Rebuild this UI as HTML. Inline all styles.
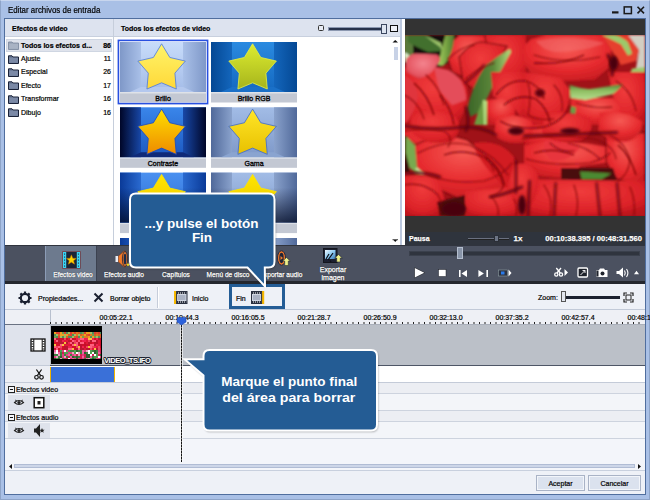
<!DOCTYPE html>
<html><head><meta charset="utf-8">
<style>
*{margin:0;padding:0;box-sizing:border-box}
html,body{width:650px;height:500px;overflow:hidden;background:#a9bfe1}
body{position:relative;font-family:"Liberation Sans",sans-serif;font-size:8px;color:#000}
.a{position:absolute}
.t{position:absolute;white-space:nowrap;line-height:1}
.w{color:#fff;-webkit-text-stroke:0.25px #fff;text-shadow:0 0 1px #000}
.k{-webkit-text-stroke:0.2px #000}
.o{color:#fff;font-weight:bold;text-shadow:1px 0 0 #223,-1px 0 0 #223,0 1px 0 #223,0 -1px 0 #223}
</style></head><body>
<!-- window frame -->
<div class="a" style="left:0;top:0;width:650px;height:500px;background:#a9c0e6;border:1px solid #8ea4c8;border-top-color:#c8d6ee"></div>
<div class="t k" style="left:8px;top:6px;font-size:8.6px;transform:scaleX(0.92);transform-origin:0 0">Editar archivos de entrada</div>
<!-- min max close -->
<svg class="a" style="left:608px;top:3px" width="40" height="14" viewBox="608 3 40 14">
 <rect x="612" y="11.3" width="6.5" height="2.2" fill="#1a1a1a"/>
 <rect x="624.2" y="6.9" width="7.2" height="6.7" fill="none" stroke="#1a1a1a" stroke-width="1.5"/>
 <path d="M637.5,6.8 L644,13.4 M644,6.8 L637.5,13.4" stroke="#1a1a1a" stroke-width="1.6"/>
</svg>
<!-- client area -->
<div class="a" style="left:4px;top:18px;width:642px;height:477px;background:#eef1f7;border:1px solid #506e9e"></div>

<!-- left panel -->
<div class="a" style="left:5px;top:19px;width:108px;height:226px;background:#fff"></div>
<div class="a" style="left:5px;top:19px;width:108px;height:18px;background:#dde3ef;border-bottom:1px solid #c8d0de"></div>
<div class="t k" style="left:12px;top:25px;font-size:7px;font-weight:bold">Efectos de video</div>
<div class="a" style="left:6px;top:39px;width:106px;height:13px;background:#dfe3ec;border:1px solid #cfd6e2"></div>
<svg class="a" style="left:8px;top:41.2px" width="11" height="9" viewBox="0 0 11 9"><path d="M0.5,1 h3.5 l1,1 h5.5 v6.5 h-10z" fill="#9aa5b8" stroke="#7a869c" stroke-width="0.8"/><rect x="1.2" y="2.8" width="8.8" height="5" fill="#a9b3c4"/></svg>
<div class="t k" style="left:21px;top:41.5px;font-size:7px;font-weight:bold">Todos los efectos d...</div>
<div class="t k" style="right:539px;top:41.5px;font-size:7px;font-weight:bold">86</div>
<svg class="a" style="left:8px;top:54.6px" width="11" height="9" viewBox="0 0 11 9"><path d="M0.5,0.8 h3.5 l1,1.2 h5.5 v6.5 h-10z" fill="#6a7894" stroke="#1a2238" stroke-width="1"/><rect x="1.3" y="2.8" width="8.6" height="4.9" fill="#7b89a6"/></svg>
<div class="t k" style="left:21px;top:54.9px;font-size:7px;font-weight:normal">Ajuste</div>
<div class="t k" style="right:539px;top:54.9px;font-size:7px;font-weight:normal">11</div>
<svg class="a" style="left:8px;top:68.0px" width="11" height="9" viewBox="0 0 11 9"><path d="M0.5,0.8 h3.5 l1,1.2 h5.5 v6.5 h-10z" fill="#6a7894" stroke="#1a2238" stroke-width="1"/><rect x="1.3" y="2.8" width="8.6" height="4.9" fill="#7b89a6"/></svg>
<div class="t k" style="left:21px;top:68.3px;font-size:7px;font-weight:normal">Especial</div>
<div class="t k" style="right:539px;top:68.3px;font-size:7px;font-weight:normal">26</div>
<svg class="a" style="left:8px;top:81.4px" width="11" height="9" viewBox="0 0 11 9"><path d="M0.5,0.8 h3.5 l1,1.2 h5.5 v6.5 h-10z" fill="#6a7894" stroke="#1a2238" stroke-width="1"/><rect x="1.3" y="2.8" width="8.6" height="4.9" fill="#7b89a6"/></svg>
<div class="t k" style="left:21px;top:81.7px;font-size:7px;font-weight:normal">Efecto</div>
<div class="t k" style="right:539px;top:81.7px;font-size:7px;font-weight:normal">17</div>
<svg class="a" style="left:8px;top:94.8px" width="11" height="9" viewBox="0 0 11 9"><path d="M0.5,0.8 h3.5 l1,1.2 h5.5 v6.5 h-10z" fill="#6a7894" stroke="#1a2238" stroke-width="1"/><rect x="1.3" y="2.8" width="8.6" height="4.9" fill="#7b89a6"/></svg>
<div class="t k" style="left:21px;top:95.1px;font-size:7px;font-weight:normal">Transformar</div>
<div class="t k" style="right:539px;top:95.1px;font-size:7px;font-weight:normal">16</div>
<svg class="a" style="left:8px;top:108.2px" width="11" height="9" viewBox="0 0 11 9"><path d="M0.5,0.8 h3.5 l1,1.2 h5.5 v6.5 h-10z" fill="#6a7894" stroke="#1a2238" stroke-width="1"/><rect x="1.3" y="2.8" width="8.6" height="4.9" fill="#7b89a6"/></svg>
<div class="t k" style="left:21px;top:108.5px;font-size:7px;font-weight:normal">Dibujo</div>
<div class="t k" style="right:539px;top:108.5px;font-size:7px;font-weight:normal">16</div>
<div class="a" style="left:113px;top:19px;width:1px;height:226px;background:#c6cedb"></div>

<!-- middle panel -->
<div class="a" style="left:114px;top:19px;width:288px;height:226px;background:#fff"></div>
<div class="a" style="left:114px;top:19px;width:286px;height:18px;background:#dde3ef;border-bottom:1px solid #c8d0de"></div>
<div class="t k" style="left:121px;top:25px;font-size:7px;font-weight:bold">Todos los efectos de video</div>
<svg class="a" style="left:114px;top:37px" width="288" height="208" viewBox="114 37 288 208"><defs><linearGradient id="wl0" x1="0" x2="1"><stop offset="0" stop-color="#7f98c8"/><stop offset="1" stop-color="#a9c0e8"/></linearGradient><linearGradient id="wr0" x1="1" x2="0"><stop offset="0" stop-color="#7f98c8"/><stop offset="1" stop-color="#a9c0e8"/></linearGradient><linearGradient id="bk0" x1="0" y1="0" x2="0" y2="1"><stop offset="0" stop-color="#c8dcfa"/><stop offset="1" stop-color="#a4bce8"/></linearGradient><linearGradient id="st0" x1="0" y1="0" x2="0" y2="1"><stop offset="0" stop-color="#fff46a"/><stop offset="1" stop-color="#ffd838"/></linearGradient><linearGradient id="wl1" x1="0" x2="1"><stop offset="0" stop-color="#044894"/><stop offset="1" stop-color="#1466bc"/></linearGradient><linearGradient id="wr1" x1="1" x2="0"><stop offset="0" stop-color="#044894"/><stop offset="1" stop-color="#1466bc"/></linearGradient><linearGradient id="bk1" x1="0" y1="0" x2="0" y2="1"><stop offset="0" stop-color="#2a8ae0"/><stop offset="1" stop-color="#1468c0"/></linearGradient><linearGradient id="st1" x1="0" y1="0" x2="0" y2="1"><stop offset="0" stop-color="#dcec30"/><stop offset="1" stop-color="#a6b41c"/></linearGradient><linearGradient id="wl2" x1="0" x2="1"><stop offset="0" stop-color="#000628"/><stop offset="1" stop-color="#1848a8"/></linearGradient><linearGradient id="wr2" x1="1" x2="0"><stop offset="0" stop-color="#000628"/><stop offset="1" stop-color="#1848a8"/></linearGradient><linearGradient id="bk2" x1="0" y1="0" x2="0" y2="1"><stop offset="0" stop-color="#3a86ea"/><stop offset="1" stop-color="#1c58c0"/></linearGradient><linearGradient id="st2" x1="0" y1="0" x2="0" y2="1"><stop offset="0" stop-color="#ffe000"/><stop offset="1" stop-color="#ee8a00"/></linearGradient><linearGradient id="wl3" x1="0" x2="1"><stop offset="0" stop-color="#50699a"/><stop offset="1" stop-color="#8aa2cc"/></linearGradient><linearGradient id="wr3" x1="1" x2="0"><stop offset="0" stop-color="#50699a"/><stop offset="1" stop-color="#8aa2cc"/></linearGradient><linearGradient id="bk3" x1="0" y1="0" x2="0" y2="1"><stop offset="0" stop-color="#a2bce6"/><stop offset="1" stop-color="#7e98c8"/></linearGradient><linearGradient id="st3" x1="0" y1="0" x2="0" y2="1"><stop offset="0" stop-color="#ffe628"/><stop offset="1" stop-color="#e8c000"/></linearGradient><linearGradient id="wl4" x1="0" x2="1"><stop offset="0" stop-color="#0a3a98"/><stop offset="1" stop-color="#2a6ad0"/></linearGradient><linearGradient id="wr4" x1="1" x2="0"><stop offset="0" stop-color="#0a3a98"/><stop offset="1" stop-color="#2a6ad0"/></linearGradient><linearGradient id="bk4" x1="0" y1="0" x2="0" y2="1"><stop offset="0" stop-color="#4a90f0"/><stop offset="1" stop-color="#2a6ad0"/></linearGradient><linearGradient id="st4" x1="0" y1="0" x2="0" y2="1"><stop offset="0" stop-color="#ffe600"/><stop offset="1" stop-color="#f0c000"/></linearGradient><linearGradient id="wl5" x1="0" x2="1"><stop offset="0" stop-color="#50699a"/><stop offset="1" stop-color="#8aa2cc"/></linearGradient><linearGradient id="wr5" x1="1" x2="0"><stop offset="0" stop-color="#50699a"/><stop offset="1" stop-color="#8aa2cc"/></linearGradient><linearGradient id="bk5" x1="0" y1="0" x2="0" y2="1"><stop offset="0" stop-color="#a2bce6"/><stop offset="1" stop-color="#7e98c8"/></linearGradient><linearGradient id="st5" x1="0" y1="0" x2="0" y2="1"><stop offset="0" stop-color="#ffe600"/><stop offset="1" stop-color="#e8c000"/></linearGradient><linearGradient id="wl6" x1="0" x2="1"><stop offset="0" stop-color="#0a3a98"/><stop offset="1" stop-color="#2a6ad0"/></linearGradient><linearGradient id="wr6" x1="1" x2="0"><stop offset="0" stop-color="#0a3a98"/><stop offset="1" stop-color="#2a6ad0"/></linearGradient><linearGradient id="bk6" x1="0" y1="0" x2="0" y2="1"><stop offset="0" stop-color="#4a90f0"/><stop offset="1" stop-color="#2a6ad0"/></linearGradient><linearGradient id="st6" x1="0" y1="0" x2="0" y2="1"><stop offset="0" stop-color="#ffe830"/><stop offset="1" stop-color="#f0c000"/></linearGradient><linearGradient id="wl7" x1="0" x2="1"><stop offset="0" stop-color="#50699a"/><stop offset="1" stop-color="#8aa2cc"/></linearGradient><linearGradient id="wr7" x1="1" x2="0"><stop offset="0" stop-color="#50699a"/><stop offset="1" stop-color="#8aa2cc"/></linearGradient><linearGradient id="bk7" x1="0" y1="0" x2="0" y2="1"><stop offset="0" stop-color="#a2bce6"/><stop offset="1" stop-color="#7e98c8"/></linearGradient><linearGradient id="st7" x1="0" y1="0" x2="0" y2="1"><stop offset="0" stop-color="#ffe628"/><stop offset="1" stop-color="#e8c000"/></linearGradient><linearGradient id="dkg" x1="0" y1="0" x2="0" y2="1"><stop offset="0.3" stop-color="#000820" stop-opacity="0"/><stop offset="1" stop-color="#000820" stop-opacity="0.75"/></linearGradient></defs><g transform="translate(120,42)"><rect x="0" y="0" width="86" height="50" fill="url(#bk0)"/><rect x="0" y="0" width="21" height="50" fill="url(#wl0)"/><rect x="63" y="0" width="23" height="50" fill="url(#wr0)"/><polygon points="21,45 63,45 74,50 10,50" fill="#b4c8ee"/><polygon points="41.60,1.80 49.83,15.47 65.38,19.07 54.91,31.13 56.29,47.03 41.60,40.80 26.91,47.03 28.29,31.13 17.82,19.07 33.37,15.47" fill="url(#st0)" stroke="#4a78e0" stroke-width="0.8" stroke-linejoin="miter"/><rect x="0" y="50.5" width="86" height="10" fill="#c3c8d3"/><rect x="0" y="50.5" width="86" height="1" fill="#dde1e8"/><text x="43" y="58.6" text-anchor="middle" font-family="Liberation Sans" font-size="7" fill="#000" stroke="#000" stroke-width="0.3">Brillo</text></g><g transform="translate(211,42)"><rect x="0" y="0" width="86" height="50" fill="url(#bk1)"/><rect x="0" y="0" width="21" height="50" fill="url(#wl1)"/><rect x="63" y="0" width="23" height="50" fill="url(#wr1)"/><polygon points="21,45 63,45 74,50 10,50" fill="#1a70c8"/><polygon points="41.60,1.80 49.83,15.47 65.38,19.07 54.91,31.13 56.29,47.03 41.60,40.80 26.91,47.03 28.29,31.13 17.82,19.07 33.37,15.47" fill="url(#st1)" stroke="#e8f040" stroke-width="0.8" stroke-linejoin="miter"/><rect x="0" y="50.5" width="86" height="10" fill="#c3c8d3"/><rect x="0" y="50.5" width="86" height="1" fill="#dde1e8"/><text x="43" y="58.6" text-anchor="middle" font-family="Liberation Sans" font-size="7" fill="#000" stroke="#000" stroke-width="0.3">Brillo RGB</text></g><g transform="translate(120,107.3)"><rect x="0" y="0" width="86" height="50" fill="url(#bk2)"/><rect x="0" y="0" width="21" height="50" fill="url(#wl2)"/><rect x="63" y="0" width="23" height="50" fill="url(#wr2)"/><polygon points="21,45 63,45 74,50 10,50" fill="#102a78"/><polygon points="41.60,1.80 49.83,15.47 65.38,19.07 54.91,31.13 56.29,47.03 41.60,40.80 26.91,47.03 28.29,31.13 17.82,19.07 33.37,15.47" fill="url(#st2)" stroke="#1848c0" stroke-width="0.8" stroke-linejoin="miter"/><rect x="0" y="50.5" width="86" height="10" fill="#c3c8d3"/><rect x="0" y="50.5" width="86" height="1" fill="#dde1e8"/><text x="43" y="58.6" text-anchor="middle" font-family="Liberation Sans" font-size="7" fill="#000" stroke="#000" stroke-width="0.3">Contraste</text></g><g transform="translate(211,107.3)"><rect x="0" y="0" width="86" height="50" fill="url(#bk3)"/><rect x="0" y="0" width="21" height="50" fill="url(#wl3)"/><rect x="63" y="0" width="23" height="50" fill="url(#wr3)"/><polygon points="21,45 63,45 74,50 10,50" fill="#8aa4d0"/><polygon points="41.60,1.80 49.83,15.47 65.38,19.07 54.91,31.13 56.29,47.03 41.60,40.80 26.91,47.03 28.29,31.13 17.82,19.07 33.37,15.47" fill="url(#st3)" stroke="#3a68d0" stroke-width="0.8" stroke-linejoin="miter"/><rect x="0" y="50.5" width="86" height="10" fill="#c3c8d3"/><rect x="0" y="50.5" width="86" height="1" fill="#dde1e8"/><text x="43" y="58.6" text-anchor="middle" font-family="Liberation Sans" font-size="7" fill="#000" stroke="#000" stroke-width="0.3">Gama</text></g><g transform="translate(120,172.6)"><rect x="0" y="0" width="86" height="50" fill="url(#bk4)"/><rect x="0" y="0" width="21" height="50" fill="url(#wl4)"/><rect x="63" y="0" width="23" height="50" fill="url(#wr4)"/><polygon points="21,45 63,45 74,50 10,50" fill="#2a62c0"/><rect x="0" y="0" width="86" height="50" fill="url(#dkg)"/><polygon points="41.60,1.80 49.83,15.47 65.38,19.07 54.91,31.13 56.29,47.03 41.60,40.80 26.91,47.03 28.29,31.13 17.82,19.07 33.37,15.47" fill="url(#st4)" stroke="#ffe600" stroke-width="0.8" stroke-linejoin="miter"/><rect x="0" y="50.5" width="86" height="10" fill="#c3c8d3"/><rect x="0" y="50.5" width="86" height="1" fill="#dde1e8"/></g><g transform="translate(211,172.6)"><rect x="0" y="0" width="86" height="50" fill="url(#bk5)"/><rect x="0" y="0" width="21" height="50" fill="url(#wl5)"/><rect x="63" y="0" width="23" height="50" fill="url(#wr5)"/><polygon points="21,45 63,45 74,50 10,50" fill="#8aa4d0"/><rect x="0" y="0" width="86" height="50" fill="url(#dkg)"/><polygon points="41.60,1.80 49.83,15.47 65.38,19.07 54.91,31.13 56.29,47.03 41.60,40.80 26.91,47.03 28.29,31.13 17.82,19.07 33.37,15.47" fill="url(#st5)" stroke="#ffe600" stroke-width="0.8" stroke-linejoin="miter"/><rect x="0" y="50.5" width="86" height="10" fill="#c3c8d3"/><rect x="0" y="50.5" width="86" height="1" fill="#dde1e8"/></g><g transform="translate(120,238)"><rect x="0" y="0" width="86" height="50" fill="url(#bk6)"/><rect x="0" y="0" width="21" height="50" fill="url(#wl6)"/><rect x="63" y="0" width="23" height="50" fill="url(#wr6)"/><polygon points="21,45 63,45 74,50 10,50" fill="#2a62c0"/><polygon points="41.60,1.80 49.83,15.47 65.38,19.07 54.91,31.13 56.29,47.03 41.60,40.80 26.91,47.03 28.29,31.13 17.82,19.07 33.37,15.47" fill="url(#st6)" stroke="#2a5ad0" stroke-width="0.8" stroke-linejoin="miter"/><rect x="0" y="50.5" width="86" height="10" fill="#c3c8d3"/><rect x="0" y="50.5" width="86" height="1" fill="#dde1e8"/></g><g transform="translate(211,238)"><rect x="0" y="0" width="86" height="50" fill="url(#bk7)"/><rect x="0" y="0" width="21" height="50" fill="url(#wl7)"/><rect x="63" y="0" width="23" height="50" fill="url(#wr7)"/><polygon points="21,45 63,45 74,50 10,50" fill="#8aa4d0"/><polygon points="41.60,1.80 49.83,15.47 65.38,19.07 54.91,31.13 56.29,47.03 41.60,40.80 26.91,47.03 28.29,31.13 17.82,19.07 33.37,15.47" fill="url(#st7)" stroke="#3a68d0" stroke-width="0.8" stroke-linejoin="miter"/><rect x="0" y="50.5" width="86" height="10" fill="#c3c8d3"/><rect x="0" y="50.5" width="86" height="1" fill="#dde1e8"/></g><rect x="118.4" y="40.4" width="89.2" height="63.2" fill="none" stroke="#2850e0" stroke-width="1.6"/></svg>
<div class="a" style="left:400px;top:19px;width:1.5px;height:226px;background:#bcc8de"></div>
<div class="a" style="left:402px;top:19px;width:3px;height:226px;background:#fff"></div>
<div class="a" style="left:318px;top:25px;width:6px;height:6px;border:1px solid #333;border-radius:1.5px;background:#e8ecf4"></div>
<div class="a" style="left:327.5px;top:26.5px;width:55px;height:4.5px;background:#27314a;border:1px solid #8c98b0"></div>
<div class="a" style="left:381px;top:24px;width:6px;height:10px;background:#dde4f0;border:1px solid #3a4660"></div>
<div class="a" style="left:390px;top:24.5px;width:7.5px;height:7.5px;border:1.5px solid #111;background:#eef0f6"></div>
<svg class="a" style="left:392px;top:40px" width="7" height="203" viewBox="0 0 7 203"><polygon points="0.5,2.5 6,2.5 3.25,0" fill="#111"/><polygon points="1.5,200 5,200 3.25,202" fill="#111"/><path d="M0.5,199.7 h5.5" stroke="#111" stroke-width="0.8"/></svg>
<div class="a" style="left:394px;top:47px;width:4px;height:13px;background:#c8d2e6"></div>

<!-- video -->
<div class="a" style="left:405px;top:19px;width:240px;height:227px;background:#333"></div>
<svg class="a" style="left:405px;top:35px" width="240" height="181" viewBox="1 0 240 181">
<defs>
 <radialGradient id="tp" cx="0.45" cy="0.35" r="0.75"><stop offset="0" stop-color="#f03c3c"/><stop offset="0.7" stop-color="#dc2228"/><stop offset="1" stop-color="#b8121a"/></radialGradient>
 <radialGradient id="tb" cx="0.5" cy="0.3" r="0.75"><stop offset="0" stop-color="#f65a54"/><stop offset="0.6" stop-color="#e62a2e"/><stop offset="1" stop-color="#c41a20"/></radialGradient>
 <radialGradient id="tpk" cx="0.5" cy="0.4" r="0.65"><stop offset="0" stop-color="#f4848e"/><stop offset="0.75" stop-color="#e45460"/><stop offset="1" stop-color="#cc2a34"/></radialGradient>
 <linearGradient id="lfC" x1="0" y1="0" x2="1" y2="0"><stop offset="0" stop-color="#3a6428"/><stop offset="0.6" stop-color="#5c883a"/><stop offset="1" stop-color="#b4dc7c"/></linearGradient>
 <linearGradient id="lfB" x1="0" y1="0" x2="1" y2="0"><stop offset="0" stop-color="#a8d060"/><stop offset="0.5" stop-color="#78a444"/><stop offset="1" stop-color="#4e7a30"/></linearGradient>
 <linearGradient id="lfE" x1="0" y1="0" x2="0" y2="1"><stop offset="0" stop-color="#4e7e30"/><stop offset="0.4" stop-color="#8cbc60"/><stop offset="1" stop-color="#b8e090"/></linearGradient>
 <filter id="bl" x="-5%" y="-5%" width="110%" height="110%"><feGaussianBlur stdDeviation="0.9"/></filter>
 <filter id="bl2" x="-20%" y="-20%" width="140%" height="140%"><feGaussianBlur stdDeviation="1.4"/></filter>
</defs>
<rect x="0" y="0" width="241" height="181" fill="#a01218"/>
<g filter="url(#bl)">
 <!-- TL dark -->
 <path d="M0,0 H62 L60,12 Q50,26 36,32 L0,30Z" fill="#15110a"/>
 <path d="M0,0 L9,0 L9,20 L0,22Z" fill="#5a7a3a"/>
 <path d="M4,0 L20,0 L37,8 L39,16 L24,17 L11,11 L4,7Z" fill="#42702e"/>
 <path d="M20,0 L37,8 L39,16 L36,12Z" fill="#9cc46a"/>
 <path d="M0,17.5 Q6,18 8,26 L1,27Z" fill="#d8ecc8"/>
 <!-- top right tulip (TL quadrant) -->
 <path d="M79,0 L122,0 L122,37 L103,48 L92,31 L83,18.5Z" fill="url(#tp)"/>
 <!-- top center tulip -->
 <path d="M43,11 L55,0 L81,0 L83,18.5 L74,37 L63,44 L48,37 L44,24Z" fill="url(#tb)" stroke="#7a0a10" stroke-width="1.2"/>
 <path d="M55,22 Q66,8 77,7 L103,11 L92,33 Q80,46 70,55 L59,46Z" fill="url(#tp)" stroke="#7a0a10" stroke-width="1.2"/>
 <!-- leaf B -->
 <path d="M34,30 Q38,12 41.5,0 L50,0 Q50,10 47,18 Q44,26 39,31Z" fill="url(#lfB)"/>
 <!-- left tulip body -->
 <path d="M0,33 L31,33 Q52,38 61,48 Q65,58 63,70 L54,90 L0,90Z" fill="url(#tp)"/>
 <path d="M2,24 Q6,19 11,18.5 L33,19.4 Q37,22 36,26 L28,37 Q22,42 15,44 L2,37Z" fill="url(#tpk)"/>
 <path d="M30,32 L44,35 Q53,40 57,46 Q62,55 62,65 L48,70 L35,55Z" fill="#e44e5a"/>
 <path d="M0,40 Q12,46 14,60 Q12,74 4,86 L0,88Z" fill="#e0343c"/>
 <!-- diagonal leaf C -->
 <path d="M106,14 Q92,22 81,31 Q74,42 70,52 Q66,62 63,74 L66,82 L78,76 Q82,64 87,55 Q92,46 96,37 Q102,26 107,17Z" fill="url(#lfC)"/>
 <!-- small leaf D -->
 <path d="M70,90 Q74,76 79,65 L83,66 L83,90Z" fill="#6c9c40"/>
 <path d="M79,65 L83,66 L82,90 L80,90Z" fill="#b4dc80"/>
 <!-- right tulips TL quadrant -->
 <path d="M87,37 L122,37 L122,90 L111,74 L89,61Z" fill="url(#tp)"/>
 <path d="M83,65 L100,63 L111,74 L111,90 L83,90Z" fill="url(#tb)"/>
 <!-- TR big tulip -->
 <path d="M120,11 L127,4 L142,0 L198,0 L207.5,15 L204,33.5 L191,44.7 L157,46.5 L127,39 L120,28Z" fill="url(#tb)"/>
 <path d="M132,6 Q166,-1 200,8 Q184,16 152,17 Q140,16 132,6Z" fill="#f26e6e" opacity="0.55"/>
 <!-- TR top right -->
 <path d="M224,0 L241,0 L241,35 L232,33.5 L235,15Z" fill="#d2cec2"/>
 <path d="M198,0 L224,0 L235,15 L232,26 L217,30 L207.5,15Z" fill="#e6402e"/>
 <path d="M198,0 L211,0 Q220,3 224,7.5 L228,18.6 L224,20.5 L217,9.3Z" fill="#9cca6a"/>
 <path d="M228,33.5 L241,32 L241,39 L226,39Z" fill="#9cc86a"/>
 <!-- TR lower -->
 <path d="M120,37 L157,43 L166.5,56 L163,78 L142,90 L120,90Z" fill="url(#tp)"/>
 <path d="M204,37 L241,37 L241,90 L217,90 L209,61Z" fill="url(#tp)"/>
 <path d="M166.5,63 L209,63 L220.5,78 L217,90 L166.5,90Z" fill="url(#tb)"/>
 <path d="M165.6,50 Q175,53 185,54 Q200,52 218.7,49 Q214,56 207.5,59.6 L181.5,65 L166.5,63Z" fill="url(#lfE)"/>
 <path d="M166.5,71 L172,72.6 L170,90 L165.6,90Z" fill="#6a9c44"/>
 <!-- BL -->
 <path d="M0,90 L38.8,90 L44.3,104.8 L37,115.8 L11,108.5 L0,101Z" fill="url(#tp)"/>
 <path d="M7.4,112 L37,97.4 L62.8,104.8 L83,121.4 L110.8,123 L112.6,158.3 L86.8,162 L55.4,163.8 L27.7,151 L11,138Z" fill="url(#tb)" stroke="#7a0a10" stroke-width="1.2"/>
 <path d="M70,108 Q96,104 110,122 Q116,146 106,158 Q88,142 72,118Z" fill="#d21c24"/>
 <path d="M0,101 L3.7,101 L5.5,138 L0,138Z" fill="#3a0c0c"/>
 <path d="M1.8,101 L11,110 L13,132.5 L24,142.6 L16.6,143.5 L5.5,132.5 L1.8,117.7Z" fill="#78aa50"/>
 <path d="M13,132.5 L24,142.6 L20,143 L11,134Z" fill="#c8e8a0"/>
 <path d="M0,138 L33,140 L40.6,163.8 L37,181 L0,181Z" fill="url(#tp)"/>
 <path d="M33,167 L61,160 L66,181 L36,181Z" fill="#4a080c"/>
 <path d="M61,156.5 L120,151 L122,181 L61,181Z" fill="url(#tp)"/>
 <!-- BR -->
 <path d="M120,90 L163,90 L157,106.8 L120,110.5Z" fill="url(#tp)"/>
 <path d="M120,110.5 L148,105 L185,108.6 L213,114 L209,127 L176,131 L166.5,144 L120,140Z" fill="url(#tb)"/>
 <path d="M140,106 Q160,102 176,112 Q168,126 148,126 Q138,118 140,106Z" fill="#e8363c"/>
 <path d="M202,99.3 L241,97.4 L241,151.5 L213,144 L202,127Z" fill="url(#tb)" stroke="#7a0a10" stroke-width="1.2"/>
 <path d="M157,133 L209,133 L213,146 L157,146Z" fill="#4a080e"/>
 <path d="M176,136.5 L207.5,138.4 L198,144 L177.7,144Z" fill="#4c8a32"/>
 <path d="M120,144 L241,146 L241,181 L120,181Z" fill="url(#tp)"/>
</g>
<g filter="url(#bl)">
 <path d="M8,80 Q30,70 52,82 Q60,96 48,106 Q26,112 10,100 Q4,90 8,80Z" fill="url(#tp)"/>
 <path d="M92,84 Q110,76 128,86 Q132,100 118,108 Q100,110 90,100Z" fill="url(#tb)"/>
 <path d="M140,80 Q166,74 186,84 Q192,98 176,106 Q150,110 138,98Z" fill="url(#tp)"/>
 <path d="M196,78 Q220,74 238,86 Q240,100 224,106 Q204,108 194,96Z" fill="url(#tb)"/>
 <path d="M110,130 Q126,124 134,140 Q136,160 124,172 Q108,170 104,150Z" fill="url(#tp)"/>
</g>
<g filter="url(#bl2)" stroke="#5a060c" fill="none" stroke-linecap="round">
 <path d="M120,101 L213,97.4" stroke-width="2.5"/>
 <path d="M125.6,146 L124,181" stroke-width="2.5"/>
 <path d="M151.7,148 L150,181" stroke-width="2"/>
 <path d="M192.6,148 L196,181" stroke-width="2"/>
 <path d="M213,148 L216,181" stroke-width="2"/>
 <path d="M0,91 Q30,96 60,92 Q80,92 92,100" stroke-width="2.5"/>
 <path d="M61,48 Q72,40 80,30" stroke-width="2"/>
 <path d="M62,72 Q66,88 62,96" stroke-width="2.5"/>
 <path d="M204,20 Q210,30 208,40" stroke-width="3"/>
 <path d="M112,126 Q112,142 112,158" stroke-width="2"/>
 <path d="M86,162 Q100,160 118,152" stroke-width="2.5"/>
 <path d="M0,139 Q20,136 36,142" stroke-width="2.5"/>
</g>
<g filter="url(#bl2)" fill="#5a060c"><ellipse cx="136" cy="58" rx="5" ry="4"/></g>
<g filter="url(#bl)" fill="none" stroke="#7a0a10" stroke-width="1.3">
 <path d="M92,60 Q104,44 122,46 Q136,50 140,64"/>
 <path d="M100,70 Q114,58 132,64 Q144,74 146,88"/>
 <path d="M96,86 Q112,96 140,92 Q160,86 166,70"/>
 <path d="M10,48 Q24,60 30,80"/>
 <path d="M36,60 Q48,74 50,90"/>
 <path d="M130,118 Q150,112 170,120"/>
 <path d="M40,120 Q60,112 84,124 Q96,134 100,150"/>
 <path d="M214,110 Q226,120 232,140"/>
 <path d="M180,20 Q160,30 130,28"/>
</g>
<g filter="url(#bl)" fill="none" stroke="#7a0a10" stroke-width="1.1" stroke-linecap="round" opacity="0.85">
 <path d="M0,96 Q20,92 40,96 Q50,102 44,112"/>
 <path d="M14,118 Q40,104 66,110 Q84,118 90,136"/>
 <path d="M24,140 Q50,150 80,146 Q100,140 108,128"/>
 <path d="M70,112 Q90,120 104,140"/>
 <path d="M82,124 Q96,132 100,150 Q96,160 86,162"/>
 <path d="M118,104 Q150,98 190,104 Q210,110 212,124"/>
 <path d="M122,124 Q150,132 186,128 Q200,124 206,118"/>
 <path d="M146,108 Q156,118 170,116"/>
 <path d="M164,108 Q184,112 196,124"/>
 <path d="M206,100 Q222,108 226,126 Q224,140 214,146"/>
 <path d="M0,150 Q20,146 34,160 Q40,170 36,181"/>
 <path d="M88,162 Q96,172 94,181"/>
 <path d="M110,164 Q114,172 112,181"/>
 <path d="M140,150 Q150,164 146,181"/>
 <path d="M170,150 Q176,166 172,181"/>
 <path d="M226,152 Q232,166 230,181"/>
 <path d="M0,60 Q14,66 20,84"/>
 <path d="M22,40 Q36,52 40,70"/>
 <path d="M44,24 Q56,12 70,10"/>
 <path d="M62,44 Q76,32 90,28"/>
 <path d="M150,50 Q160,60 158,76"/>
 <path d="M124,48 Q128,62 124,80 Q134,86 150,84"/>
 <path d="M212,46 Q228,56 232,76"/>
 <path d="M172,68 Q190,74 208,72"/>
 <path d="M130,20 Q160,30 196,22"/>
</g>
<g filter="url(#bl2)" fill="#4a060a">
 <ellipse cx="50" cy="174" rx="12" ry="7"/>
 <ellipse cx="112" cy="96" rx="8" ry="4"/>
 <ellipse cx="210" cy="28" rx="4" ry="7"/>
 <ellipse cx="118" cy="170" rx="4" ry="10"/>
 <ellipse cx="166" cy="96" rx="10" ry="3"/>
</g>
</svg>

<div class="a" style="left:405px;top:232px;width:240px;height:14px;background:#2f343d"></div>

<!-- dark toolbar -->
<div class="a" style="left:5px;top:245px;width:640px;height:39px;background:#4b5160;border-top:1px solid #30343e;border-bottom:3px solid #24272e"></div>
<div class="a" style="left:45px;top:246px;width:52px;height:35px;background:#6d7a8e;border-left:1px solid #8c9cb6;border-right:1px solid #3c4250"></div>
<div class="a" style="left:404px;top:246px;width:241px;height:35px;background:#4b5160"></div>


<!-- toolbar items -->
<svg class="a" style="left:62px;top:251px" width="19" height="18" viewBox="0 0 19 18">
 <rect x="0.5" y="0.5" width="18" height="17" fill="#1c2436" stroke="#8a4a50" stroke-width="0.6"/>
 <rect x="1" y="1" width="3.2" height="16" fill="#3cd4f4"/><rect x="14.8" y="1" width="3.2" height="16" fill="#3cd4f4"/>
 <path d="M2.6,2.5v1.2M2.6,5.5v1.2M2.6,8.5v1.2M2.6,11.5v1.2M2.6,14.5v1.2M16.4,2.5v1.2M16.4,5.5v1.2M16.4,8.5v1.2M16.4,11.5v1.2M16.4,14.5v1.2" stroke="#1a3040" stroke-width="1"/>
 <polygon points="9.4,3.8 10.8,7.3 14.3,7.4 11.6,9.7 12.5,13.2 9.4,11.2 6.3,13.2 7.2,9.7 4.5,7.4 8,7.3" fill="#ffd400" stroke="#c07000" stroke-width="0.5"/>
</svg>
<div class="t w" style="left:72.5px;top:271px;font-size:7px;transform:translateX(-50%) scaleX(0.94)">Efectos video</div>
<svg class="a" style="left:115px;top:250px" width="15" height="18" viewBox="0 0 15 18">
 <path d="M0.5,6 h3 v6 h-3z" fill="#e8ecf4"/>
 <path d="M3.5,6 L9,1 L10.5,1 L10.5,17 L9,17 L3.5,12z" fill="#f07828" stroke="#7a3010" stroke-width="0.5"/>
 <ellipse cx="10" cy="9" rx="2.6" ry="7.6" fill="#f07828" stroke="#20263a" stroke-width="0.8"/>
 <ellipse cx="10" cy="9" rx="1.4" ry="5.5" fill="#1e2a48"/>
 <polygon points="13,12.5 13.6,13.9 15,14 13.9,14.9 14.3,16.3 13,15.5 11.7,16.3 12.1,14.9 11,14 12.4,13.9" fill="#f0d020"/>
</svg>
<div class="t w" style="left:124px;top:271px;font-size:7px;transform:translateX(-50%) scaleX(0.94)">Efectos audio</div>
<div class="t w" style="left:176px;top:271px;font-size:7px;transform:translateX(-50%) scaleX(0.94)">Capítulos</div>
<div class="t w" style="left:228px;top:271px;font-size:7px;transform:translateX(-50%) scaleX(0.94)">Menú de disco</div>
<svg class="a" style="left:276px;top:250px" width="16" height="17" viewBox="0 0 16 17">
 <ellipse cx="5.5" cy="8" rx="4" ry="7.2" fill="#f07828" stroke="#1a2440" stroke-width="0.9"/>
 <ellipse cx="5.5" cy="8" rx="2.2" ry="5.2" fill="#1e2438"/>
 <polygon points="4.5,6 7,8 4.5,10" fill="#f08030"/>
 <polygon points="10.5,7.5 14.3,11 12.3,11 12.3,15.5 8.7,15.5 8.7,11 6.7,11" fill="#eef08a" stroke="#2a3030" stroke-width="0.6"/>
</svg>
<div class="t w" style="left:281px;top:271px;font-size:7px;transform:translateX(-50%) scaleX(0.94)">Exportar audio</div>
<svg class="a" style="left:323px;top:248px" width="20" height="15" viewBox="0 0 20 15">
 <rect x="0.5" y="0.5" width="13.5" height="14" fill="#1c2030" stroke="#14161e" stroke-width="1"/>
 <defs><linearGradient id="eig" x1="0" y1="0" x2="1" y2="1"><stop offset="0" stop-color="#f0f8ff"/><stop offset="0.5" stop-color="#8ccaf0"/><stop offset="1" stop-color="#3a78b8"/></linearGradient></defs>
 <rect x="2" y="2" width="10.5" height="9" fill="url(#eig)"/>
 <path d="M3,11 l3,-5 M5,12 l5,-7 M7,12.5 l1,1.5" stroke="#0e1018" stroke-width="1.2"/>
 <polygon points="15.5,6.5 19.3,10 17.3,10 17.3,14 13.7,14 13.7,10 11.7,10" fill="#eef08a" stroke="#1e2430" stroke-width="0.6"/>
</svg>
<div class="t w" style="left:333px;top:266.4px;font-size:7px;transform:translateX(-50%)">Exportar</div>
<div class="t w" style="left:333px;top:274.4px;font-size:7px;transform:translateX(-50%)">imagen</div>

<!-- player -->
<div class="t w" style="left:409px;top:235px;font-size:7px;font-weight:bold">Pausa</div>
<div class="a" style="left:468px;top:238px;width:41px;height:2px;background:#6a7080;border-bottom:0.5px solid #222"></div>
<div class="a" style="left:493.5px;top:235.3px;width:5px;height:7px;background:#6c7484;border:1px solid #2a2e36"></div>
<div class="t w" style="left:513.5px;top:234.5px;font-size:8px;font-weight:bold">1x</div>
<div class="t w" style="right:8px;top:235px;font-size:7.6px;font-weight:bold">00:10:38.395 / 00:48:31.560</div>
<div class="a" style="left:409px;top:251px;width:231px;height:5px;background:#2f343e;border:1px solid #3a404c"></div>
<div class="a" style="left:456.5px;top:247.3px;width:6px;height:12px;background:#8894a8;border:1px solid #b4bece"></div>
<svg class="a" style="left:404px;top:262px" width="241" height="20" viewBox="400 262 241 20">
 <polygon points="410.5,5.5 410.5,16 421,10.75" transform="translate(0,262)" fill="#fff" stroke="#1a1d24" stroke-width="0.6"/>
 <rect x="434.5" y="269.5" width="7.5" height="7" fill="#fff" stroke="#1a1d24" stroke-width="0.5"/>
 <path d="M455,270 h1.6 v7 h-1.6z M463,270 v7 l-5.5,-3.5z" fill="#fff"/>
 <path d="M482.4,270 h1.6 v7 h-1.6z M474.4,270 v7 l5.5,-3.5z" fill="#fff"/>
 <rect x="494.5" y="270" width="9" height="6" fill="#2b3140" stroke="#9aa" stroke-width="0.5"/>
 <rect x="497" y="271.5" width="3.5" height="3" fill="#2a7ae8"/>
 <polygon points="504.5,269.5 507.5,273 504.5,276.5" fill="#fff"/>
 <g fill="none" stroke="#fff" stroke-width="1.3"><circle cx="552.3" cy="274.5" r="1.6"/><circle cx="557" cy="274.5" r="1.6"/><path d="M553,273 l4,-5 M556.3,273 l-4,-5"/></g>
 <polygon points="560.5,269 564,272.5 560.5,276" fill="#fff"/>
 <rect x="574" y="268" width="9.5" height="9" rx="1" fill="#1e222b" stroke="#fff" stroke-width="1.3"/>
 <path d="M576.5,275 l4.5,-4.5 M578.5,270.5 h2.5 v2.5" stroke="#fff" stroke-width="0.9" fill="none"/>
 <path d="M592.5,270 h2.5 l1,-1.5 h4 l1,1.5 h2.5 v7 h-11z" fill="#fff"/>
 <rect x="592.5" y="270.5" width="2" height="6" fill="#1e222b"/>
 <circle cx="598.5" cy="273.5" r="2" fill="#1e222b"/>
 <path d="M612.5,271 h2.5 l4,-3.5 v10 l-4,-3.5 h-2.5z" fill="#fff"/>
 <path d="M620.5,270.5 q1.5,2.5 0,5 M622.5,269 q2.8,4 0,8" stroke="#fff" stroke-width="1.1" fill="none"/>
 <polygon points="630,274.2 635,274.2 632.5,270.8" fill="#fff"/>
</svg>

<!-- timeline toolbar -->
<svg class="a" style="left:18px;top:291px" width="15" height="14" viewBox="0 0 15 14">
 <circle cx="7" cy="7" r="4.2" fill="none" stroke="#1a2030" stroke-width="2.2"/>
 <g stroke="#1a2030" stroke-width="2.2"><path d="M7,0.5v2.5M7,11v2.5M0.5,7h2.5M11,7h2.5M2.4,2.4l1.8,1.8M9.8,9.8l1.8,1.8M2.4,11.6l1.8,-1.8M9.8,4.2l1.8,-1.8"/></g>
</svg>
<div class="t k" style="left:38px;top:295px;font-size:7px">Propiedades...</div>
<svg class="a" style="left:93px;top:292px" width="11" height="11" viewBox="0 0 11 11"><path d="M1.5,1.5 l8,8 M9.5,1.5 l-8,8" stroke="#1a2030" stroke-width="2"/></svg>
<div class="t k" style="left:110px;top:295px;font-size:7px">Borrar objeto</div>
<div class="a" style="left:157px;top:287px;width:1px;height:21px;background:#c6cdda;box-shadow:1px 0 0 #fff"></div>
<svg class="a" style="left:174px;top:291px" width="14" height="13" viewBox="0 0 14 13">
 <rect x="0" y="0" width="2.6" height="13" fill="#f6b800"/>
 <rect x="2.6" y="0.5" width="10.4" height="12" fill="#d0d6e2" stroke="#2a3040" stroke-width="1"/>
 <rect x="3" y="1" width="9.6" height="2" fill="#2a3040"/><rect x="3" y="10" width="9.6" height="2" fill="#2a3040"/>
 <path d="M4,2h1M6,2h1M8,2h1M10,2h1M4,11h1M6,11h1M8,11h1M10,11h1" stroke="#fff" stroke-width="1"/>
 <rect x="4" y="4" width="7.5" height="5" fill="#aab2c4"/>
</svg>
<div class="t k" style="left:192px;top:295px;font-size:7px">Inicio</div>
<div class="t k" style="left:236px;top:295px;font-size:7px">Fin</div>
<svg class="a" style="left:251px;top:291px" width="14" height="13" viewBox="0 0 14 13">
 <rect x="10.6" y="0" width="2.6" height="13" fill="#f6b800"/>
 <rect x="0.5" y="0.5" width="10.1" height="12" fill="#d0d6e2" stroke="#2a3040" stroke-width="1"/>
 <rect x="1" y="1" width="9.3" height="2" fill="#2a3040"/><rect x="1" y="10" width="9.3" height="2" fill="#2a3040"/>
 <path d="M2,2h1M4,2h1M6,2h1M8,2h1M2,11h1M4,11h1M6,11h1M8,11h1" stroke="#fff" stroke-width="1"/>
 <rect x="2" y="4" width="7.3" height="5" fill="#aab2c4"/>
</svg>
<div class="a" style="left:229px;top:284px;width:56px;height:25px;border:3px solid #245d96"></div>
<div class="t k" style="left:538px;top:294px;font-size:7px">Zoom:</div>
<div class="a" style="left:562px;top:296px;width:58px;height:3px;background:#1c2230"></div>
<div class="a" style="left:561px;top:291px;width:5px;height:11px;background:#e4e8f0;border:1px solid #555"></div>
<svg class="a" style="left:623px;top:292px" width="11" height="11" viewBox="0 0 11 11"><path d="M1,4 v-3 h3 M7,1 h3 v3 M10,7 v3 h-3 M4,10 h-3 v-3" stroke="#222" stroke-width="1.2" fill="none"/><rect x="3" y="3" width="5" height="5" fill="none" stroke="#222" stroke-width="1"/></svg>
<div class="a" style="left:5px;top:309px;width:640px;height:1px;background:#c2cad8"></div>

<!-- ruler -->
<div class="a" style="left:5px;top:310px;width:640px;height:15px;background:#eef0f5;border-bottom:1px solid #aab0bb"></div>
<div class="a" style="left:50px;top:310px;width:1px;height:14px;background:#b8c0ce"></div>
<div class="a" style="left:5px;top:324px;width:45px;height:1px;background:#6a7282"></div>
<div class="t k" style="left:99.5px;top:313.5px;font-size:7px">00:05:22.1</div>
<div class="t k" style="left:165.5px;top:313.5px;font-size:7px">00:10:44.3</div>
<div class="t k" style="left:231.5px;top:313.5px;font-size:7px">00:16:05.5</div>
<div class="t k" style="left:297.5px;top:313.5px;font-size:7px">00:21:28.7</div>
<div class="t k" style="left:363.5px;top:313.5px;font-size:7px">00:26:50.9</div>
<div class="t k" style="left:429.5px;top:313.5px;font-size:7px">00:32:13.0</div>
<div class="t k" style="left:495.5px;top:313.5px;font-size:7px">00:37:35.2</div>
<div class="t k" style="left:561.5px;top:313.5px;font-size:7px">00:42:57.4</div>
<div class="t k" style="left:627.5px;top:313.5px;font-size:7px">00:48:19.6</div>
<svg class="a" style="left:0;top:322px" width="650" height="3"><rect x="50.0" y="0" width="1" height="2" fill="#222"/><rect x="55.5" y="0" width="1" height="2" fill="#222"/><rect x="61.0" y="0" width="1" height="2" fill="#222"/><rect x="66.5" y="0" width="1" height="2" fill="#222"/><rect x="72.0" y="0" width="1" height="2" fill="#222"/><rect x="77.5" y="0" width="1" height="2" fill="#222"/><rect x="83.0" y="0" width="1" height="2" fill="#222"/><rect x="88.5" y="0" width="1" height="2" fill="#222"/><rect x="94.0" y="0" width="1" height="2" fill="#222"/><rect x="99.5" y="0" width="1" height="2" fill="#222"/><rect x="105.0" y="0" width="1" height="2" fill="#222"/><rect x="110.5" y="0" width="1" height="2" fill="#222"/><rect x="116.0" y="0" width="1" height="2" fill="#222"/><rect x="121.5" y="0" width="1" height="2" fill="#222"/><rect x="127.0" y="0" width="1" height="2" fill="#222"/><rect x="132.5" y="0" width="1" height="2" fill="#222"/><rect x="138.0" y="0" width="1" height="2" fill="#222"/><rect x="143.5" y="0" width="1" height="2" fill="#222"/><rect x="149.0" y="0" width="1" height="2" fill="#222"/><rect x="154.5" y="0" width="1" height="2" fill="#222"/><rect x="160.0" y="0" width="1" height="2" fill="#222"/><rect x="165.5" y="0" width="1" height="2" fill="#222"/><rect x="171.0" y="0" width="1" height="2" fill="#222"/><rect x="176.5" y="0" width="1" height="2" fill="#222"/><rect x="182.0" y="0" width="1" height="2" fill="#222"/><rect x="187.5" y="0" width="1" height="2" fill="#222"/><rect x="193.0" y="0" width="1" height="2" fill="#222"/><rect x="198.5" y="0" width="1" height="2" fill="#222"/><rect x="204.0" y="0" width="1" height="2" fill="#222"/><rect x="209.5" y="0" width="1" height="2" fill="#222"/><rect x="215.0" y="0" width="1" height="2" fill="#222"/><rect x="220.5" y="0" width="1" height="2" fill="#222"/><rect x="226.0" y="0" width="1" height="2" fill="#222"/><rect x="231.5" y="0" width="1" height="2" fill="#222"/><rect x="237.0" y="0" width="1" height="2" fill="#222"/><rect x="242.5" y="0" width="1" height="2" fill="#222"/><rect x="248.0" y="0" width="1" height="2" fill="#222"/><rect x="253.5" y="0" width="1" height="2" fill="#222"/><rect x="259.0" y="0" width="1" height="2" fill="#222"/><rect x="264.5" y="0" width="1" height="2" fill="#222"/><rect x="270.0" y="0" width="1" height="2" fill="#222"/><rect x="275.5" y="0" width="1" height="2" fill="#222"/><rect x="281.0" y="0" width="1" height="2" fill="#222"/><rect x="286.5" y="0" width="1" height="2" fill="#222"/><rect x="292.0" y="0" width="1" height="2" fill="#222"/><rect x="297.5" y="0" width="1" height="2" fill="#222"/><rect x="303.0" y="0" width="1" height="2" fill="#222"/><rect x="308.5" y="0" width="1" height="2" fill="#222"/><rect x="314.0" y="0" width="1" height="2" fill="#222"/><rect x="319.5" y="0" width="1" height="2" fill="#222"/><rect x="325.0" y="0" width="1" height="2" fill="#222"/><rect x="330.5" y="0" width="1" height="2" fill="#222"/><rect x="336.0" y="0" width="1" height="2" fill="#222"/><rect x="341.5" y="0" width="1" height="2" fill="#222"/><rect x="347.0" y="0" width="1" height="2" fill="#222"/><rect x="352.5" y="0" width="1" height="2" fill="#222"/><rect x="358.0" y="0" width="1" height="2" fill="#222"/><rect x="363.5" y="0" width="1" height="2" fill="#222"/><rect x="369.0" y="0" width="1" height="2" fill="#222"/><rect x="374.5" y="0" width="1" height="2" fill="#222"/><rect x="380.0" y="0" width="1" height="2" fill="#222"/><rect x="385.5" y="0" width="1" height="2" fill="#222"/><rect x="391.0" y="0" width="1" height="2" fill="#222"/><rect x="396.5" y="0" width="1" height="2" fill="#222"/><rect x="402.0" y="0" width="1" height="2" fill="#222"/><rect x="407.5" y="0" width="1" height="2" fill="#222"/><rect x="413.0" y="0" width="1" height="2" fill="#222"/><rect x="418.5" y="0" width="1" height="2" fill="#222"/><rect x="424.0" y="0" width="1" height="2" fill="#222"/><rect x="429.5" y="0" width="1" height="2" fill="#222"/><rect x="435.0" y="0" width="1" height="2" fill="#222"/><rect x="440.5" y="0" width="1" height="2" fill="#222"/><rect x="446.0" y="0" width="1" height="2" fill="#222"/><rect x="451.5" y="0" width="1" height="2" fill="#222"/><rect x="457.0" y="0" width="1" height="2" fill="#222"/><rect x="462.5" y="0" width="1" height="2" fill="#222"/><rect x="468.0" y="0" width="1" height="2" fill="#222"/><rect x="473.5" y="0" width="1" height="2" fill="#222"/><rect x="479.0" y="0" width="1" height="2" fill="#222"/><rect x="484.5" y="0" width="1" height="2" fill="#222"/><rect x="490.0" y="0" width="1" height="2" fill="#222"/><rect x="495.5" y="0" width="1" height="2" fill="#222"/><rect x="501.0" y="0" width="1" height="2" fill="#222"/><rect x="506.5" y="0" width="1" height="2" fill="#222"/><rect x="512.0" y="0" width="1" height="2" fill="#222"/><rect x="517.5" y="0" width="1" height="2" fill="#222"/><rect x="523.0" y="0" width="1" height="2" fill="#222"/><rect x="528.5" y="0" width="1" height="2" fill="#222"/><rect x="534.0" y="0" width="1" height="2" fill="#222"/><rect x="539.5" y="0" width="1" height="2" fill="#222"/><rect x="545.0" y="0" width="1" height="2" fill="#222"/><rect x="550.5" y="0" width="1" height="2" fill="#222"/><rect x="556.0" y="0" width="1" height="2" fill="#222"/><rect x="561.5" y="0" width="1" height="2" fill="#222"/><rect x="567.0" y="0" width="1" height="2" fill="#222"/><rect x="572.5" y="0" width="1" height="2" fill="#222"/><rect x="578.0" y="0" width="1" height="2" fill="#222"/><rect x="583.5" y="0" width="1" height="2" fill="#222"/><rect x="589.0" y="0" width="1" height="2" fill="#222"/><rect x="594.5" y="0" width="1" height="2" fill="#222"/><rect x="600.0" y="0" width="1" height="2" fill="#222"/><rect x="605.5" y="0" width="1" height="2" fill="#222"/><rect x="611.0" y="0" width="1" height="2" fill="#222"/><rect x="616.5" y="0" width="1" height="2" fill="#222"/><rect x="622.0" y="0" width="1" height="2" fill="#222"/><rect x="627.5" y="0" width="1" height="2" fill="#222"/><rect x="633.0" y="0" width="1" height="2" fill="#222"/><rect x="638.5" y="0" width="1" height="2" fill="#222"/></svg>

<!-- tracks -->
<div class="a" style="left:5px;top:325px;width:45px;height:41px;background:#dfe3ec;border-bottom:1px solid #c4cbd8"></div>
<div class="a" style="left:50px;top:325px;width:595px;height:41px;background:#bbc0c8;border-bottom:1px solid #4e5666"></div>
<svg class="a" style="left:30px;top:338px" width="16" height="14" viewBox="0 0 16 14">
 <rect x="1" y="1" width="14" height="12" fill="#fff" stroke="#111" stroke-width="1.3"/>
 <path d="M3.8,1v12M12.2,1v12" stroke="#111" stroke-width="1"/>
 <path d="M1.5,3.5h2M1.5,6h2M1.5,8.5h2M1.5,11h2M12.5,3.5h2M12.5,6h2M12.5,8.5h2M12.5,11h2" stroke="#111" stroke-width="0.9"/>
</svg>
<div class="a" style="left:51px;top:326px;width:51px;height:38px;background:#000"></div>
<svg class="a" style="left:54px;top:332px" width="47" height="27" viewBox="0 0 47 27"><rect width="47" height="27" fill="#b83040"/><rect x="0" y="0" width="2" height="2" fill="#f0a020"/><rect x="2" y="0" width="2" height="2" fill="#e04030"/><rect x="4" y="0" width="2" height="2" fill="#e04030"/><rect x="6" y="0" width="2" height="2" fill="#f0a020"/><rect x="8" y="0" width="2" height="2" fill="#70a050"/><rect x="10" y="0" width="2" height="2" fill="#e04030"/><rect x="12" y="0" width="2" height="2" fill="#50905a"/><rect x="14" y="0" width="2" height="2" fill="#a0c060"/><rect x="16" y="0" width="2" height="2" fill="#e04030"/><rect x="18" y="0" width="2" height="2" fill="#e07a20"/><rect x="20" y="0" width="2" height="2" fill="#e04030"/><rect x="22" y="0" width="2" height="2" fill="#e07a20"/><rect x="24" y="0" width="2" height="2" fill="#d86028"/><rect x="26" y="0" width="2" height="2" fill="#50905a"/><rect x="28" y="0" width="2" height="2" fill="#70a050"/><rect x="30" y="0" width="2" height="2" fill="#e04030"/><rect x="32" y="0" width="2" height="2" fill="#f0a020"/><rect x="34" y="0" width="2" height="2" fill="#f0a020"/><rect x="36" y="0" width="2" height="2" fill="#a0c060"/><rect x="38" y="0" width="2" height="2" fill="#50905a"/><rect x="40" y="0" width="2" height="2" fill="#e04030"/><rect x="42" y="0" width="2" height="2" fill="#d86028"/><rect x="44" y="0" width="2" height="2" fill="#e04030"/><rect x="46" y="0" width="2" height="2" fill="#50905a"/><rect x="0" y="2" width="2" height="2" fill="#50905a"/><rect x="2" y="2" width="2" height="2" fill="#a0c060"/><rect x="4" y="2" width="2" height="2" fill="#d86028"/><rect x="6" y="2" width="2" height="2" fill="#f0a020"/><rect x="8" y="2" width="2" height="2" fill="#f0a020"/><rect x="10" y="2" width="2" height="2" fill="#a0c060"/><rect x="12" y="2" width="2" height="2" fill="#f0a020"/><rect x="14" y="2" width="2" height="2" fill="#d86028"/><rect x="16" y="2" width="2" height="2" fill="#e04030"/><rect x="18" y="2" width="2" height="2" fill="#50905a"/><rect x="20" y="2" width="2" height="2" fill="#a0c060"/><rect x="22" y="2" width="2" height="2" fill="#e07a20"/><rect x="24" y="2" width="2" height="2" fill="#a0c060"/><rect x="26" y="2" width="2" height="2" fill="#d86028"/><rect x="28" y="2" width="2" height="2" fill="#e07a20"/><rect x="30" y="2" width="2" height="2" fill="#f0a020"/><rect x="32" y="2" width="2" height="2" fill="#d86028"/><rect x="34" y="2" width="2" height="2" fill="#e04030"/><rect x="36" y="2" width="2" height="2" fill="#e07a20"/><rect x="38" y="2" width="2" height="2" fill="#70a050"/><rect x="40" y="2" width="2" height="2" fill="#d86028"/><rect x="42" y="2" width="2" height="2" fill="#e07a20"/><rect x="44" y="2" width="2" height="2" fill="#d86028"/><rect x="46" y="2" width="2" height="2" fill="#d86028"/><rect x="0" y="4" width="2" height="2" fill="#70a050"/><rect x="2" y="4" width="2" height="2" fill="#50905a"/><rect x="4" y="4" width="2" height="2" fill="#e04030"/><rect x="6" y="4" width="2" height="2" fill="#a0c060"/><rect x="8" y="4" width="2" height="2" fill="#50905a"/><rect x="10" y="4" width="2" height="2" fill="#a0c060"/><rect x="12" y="4" width="2" height="2" fill="#d86028"/><rect x="14" y="4" width="2" height="2" fill="#50905a"/><rect x="16" y="4" width="2" height="2" fill="#50905a"/><rect x="18" y="4" width="2" height="2" fill="#a0c060"/><rect x="20" y="4" width="2" height="2" fill="#d86028"/><rect x="22" y="4" width="2" height="2" fill="#e04030"/><rect x="24" y="4" width="2" height="2" fill="#50905a"/><rect x="26" y="4" width="2" height="2" fill="#f0a020"/><rect x="28" y="4" width="2" height="2" fill="#70a050"/><rect x="30" y="4" width="2" height="2" fill="#e07a20"/><rect x="32" y="4" width="2" height="2" fill="#e07a20"/><rect x="34" y="4" width="2" height="2" fill="#f0a020"/><rect x="36" y="4" width="2" height="2" fill="#50905a"/><rect x="38" y="4" width="2" height="2" fill="#f0a020"/><rect x="40" y="4" width="2" height="2" fill="#70a050"/><rect x="42" y="4" width="2" height="2" fill="#a0c060"/><rect x="44" y="4" width="2" height="2" fill="#50905a"/><rect x="46" y="4" width="2" height="2" fill="#d86028"/><rect x="0" y="6" width="2" height="2" fill="#ff6080"/><rect x="2" y="6" width="2" height="2" fill="#b81830"/><rect x="4" y="6" width="2" height="2" fill="#b81830"/><rect x="6" y="6" width="2" height="2" fill="#d01028"/><rect x="8" y="6" width="2" height="2" fill="#b81830"/><rect x="10" y="6" width="2" height="2" fill="#f04060"/><rect x="12" y="6" width="2" height="2" fill="#d01028"/><rect x="14" y="6" width="2" height="2" fill="#e01838"/><rect x="16" y="6" width="2" height="2" fill="#ff6080"/><rect x="18" y="6" width="2" height="2" fill="#c01030"/><rect x="20" y="6" width="2" height="2" fill="#d01028"/><rect x="22" y="6" width="2" height="2" fill="#f02050"/><rect x="24" y="6" width="2" height="2" fill="#f04060"/><rect x="26" y="6" width="2" height="2" fill="#ff6080"/><rect x="28" y="6" width="2" height="2" fill="#ff6080"/><rect x="30" y="6" width="2" height="2" fill="#f02050"/><rect x="32" y="6" width="2" height="2" fill="#f02050"/><rect x="34" y="6" width="2" height="2" fill="#f8c040"/><rect x="36" y="6" width="2" height="2" fill="#f8c040"/><rect x="38" y="6" width="2" height="2" fill="#f02050"/><rect x="40" y="6" width="2" height="2" fill="#d01028"/><rect x="42" y="6" width="2" height="2" fill="#f02050"/><rect x="44" y="6" width="2" height="2" fill="#b81830"/><rect x="46" y="6" width="2" height="2" fill="#c01030"/><rect x="0" y="8" width="2" height="2" fill="#e01838"/><rect x="2" y="8" width="2" height="2" fill="#ff6080"/><rect x="4" y="8" width="2" height="2" fill="#b81830"/><rect x="6" y="8" width="2" height="2" fill="#b81830"/><rect x="8" y="8" width="2" height="2" fill="#f02050"/><rect x="10" y="8" width="2" height="2" fill="#e01838"/><rect x="12" y="8" width="2" height="2" fill="#e01838"/><rect x="14" y="8" width="2" height="2" fill="#b81830"/><rect x="16" y="8" width="2" height="2" fill="#d01028"/><rect x="18" y="8" width="2" height="2" fill="#ff6080"/><rect x="20" y="8" width="2" height="2" fill="#f04060"/><rect x="22" y="8" width="2" height="2" fill="#e01838"/><rect x="24" y="8" width="2" height="2" fill="#ff6080"/><rect x="26" y="8" width="2" height="2" fill="#e01838"/><rect x="28" y="8" width="2" height="2" fill="#f02050"/><rect x="30" y="8" width="2" height="2" fill="#f02050"/><rect x="32" y="8" width="2" height="2" fill="#e01838"/><rect x="34" y="8" width="2" height="2" fill="#f04060"/><rect x="36" y="8" width="2" height="2" fill="#b81830"/><rect x="38" y="8" width="2" height="2" fill="#ff6080"/><rect x="40" y="8" width="2" height="2" fill="#ff6080"/><rect x="42" y="8" width="2" height="2" fill="#c01030"/><rect x="44" y="8" width="2" height="2" fill="#e01838"/><rect x="46" y="8" width="2" height="2" fill="#d01028"/><rect x="0" y="10" width="2" height="2" fill="#d01028"/><rect x="2" y="10" width="2" height="2" fill="#d01028"/><rect x="4" y="10" width="2" height="2" fill="#c01030"/><rect x="6" y="10" width="2" height="2" fill="#b81830"/><rect x="8" y="10" width="2" height="2" fill="#b81830"/><rect x="10" y="10" width="2" height="2" fill="#f8c040"/><rect x="12" y="10" width="2" height="2" fill="#b81830"/><rect x="14" y="10" width="2" height="2" fill="#f02050"/><rect x="16" y="10" width="2" height="2" fill="#ff6080"/><rect x="18" y="10" width="2" height="2" fill="#b81830"/><rect x="20" y="10" width="2" height="2" fill="#f04060"/><rect x="22" y="10" width="2" height="2" fill="#ff6080"/><rect x="24" y="10" width="2" height="2" fill="#b81830"/><rect x="26" y="10" width="2" height="2" fill="#ff6080"/><rect x="28" y="10" width="2" height="2" fill="#ff6080"/><rect x="30" y="10" width="2" height="2" fill="#d01028"/><rect x="32" y="10" width="2" height="2" fill="#e01838"/><rect x="34" y="10" width="2" height="2" fill="#b81830"/><rect x="36" y="10" width="2" height="2" fill="#d01028"/><rect x="38" y="10" width="2" height="2" fill="#e01838"/><rect x="40" y="10" width="2" height="2" fill="#b81830"/><rect x="42" y="10" width="2" height="2" fill="#c01030"/><rect x="44" y="10" width="2" height="2" fill="#e01838"/><rect x="46" y="10" width="2" height="2" fill="#d01028"/><rect x="0" y="12" width="2" height="2" fill="#f8c040"/><rect x="2" y="12" width="2" height="2" fill="#d01028"/><rect x="4" y="12" width="2" height="2" fill="#d01028"/><rect x="6" y="12" width="2" height="2" fill="#ff6080"/><rect x="8" y="12" width="2" height="2" fill="#f8c040"/><rect x="10" y="12" width="2" height="2" fill="#e01838"/><rect x="12" y="12" width="2" height="2" fill="#e01838"/><rect x="14" y="12" width="2" height="2" fill="#e01838"/><rect x="16" y="12" width="2" height="2" fill="#d01028"/><rect x="18" y="12" width="2" height="2" fill="#ff6080"/><rect x="20" y="12" width="2" height="2" fill="#f8c040"/><rect x="22" y="12" width="2" height="2" fill="#ff6080"/><rect x="24" y="12" width="2" height="2" fill="#d01028"/><rect x="26" y="12" width="2" height="2" fill="#c01030"/><rect x="28" y="12" width="2" height="2" fill="#d01028"/><rect x="30" y="12" width="2" height="2" fill="#c01030"/><rect x="32" y="12" width="2" height="2" fill="#d01028"/><rect x="34" y="12" width="2" height="2" fill="#d01028"/><rect x="36" y="12" width="2" height="2" fill="#ff6080"/><rect x="38" y="12" width="2" height="2" fill="#ff6080"/><rect x="40" y="12" width="2" height="2" fill="#b81830"/><rect x="42" y="12" width="2" height="2" fill="#f02050"/><rect x="44" y="12" width="2" height="2" fill="#e01838"/><rect x="46" y="12" width="2" height="2" fill="#c01030"/><rect x="0" y="14" width="2" height="2" fill="#ff6080"/><rect x="2" y="14" width="2" height="2" fill="#f04060"/><rect x="4" y="14" width="2" height="2" fill="#ff6080"/><rect x="6" y="14" width="2" height="2" fill="#f04060"/><rect x="8" y="14" width="2" height="2" fill="#d01028"/><rect x="10" y="14" width="2" height="2" fill="#c01030"/><rect x="12" y="14" width="2" height="2" fill="#b81830"/><rect x="14" y="14" width="2" height="2" fill="#f02050"/><rect x="16" y="14" width="2" height="2" fill="#f02050"/><rect x="18" y="14" width="2" height="2" fill="#d01028"/><rect x="20" y="14" width="2" height="2" fill="#d01028"/><rect x="22" y="14" width="2" height="2" fill="#f04060"/><rect x="24" y="14" width="2" height="2" fill="#f8c040"/><rect x="26" y="14" width="2" height="2" fill="#c01030"/><rect x="28" y="14" width="2" height="2" fill="#f02050"/><rect x="30" y="14" width="2" height="2" fill="#d01028"/><rect x="32" y="14" width="2" height="2" fill="#f04060"/><rect x="34" y="14" width="2" height="2" fill="#f8c040"/><rect x="36" y="14" width="2" height="2" fill="#ff6080"/><rect x="38" y="14" width="2" height="2" fill="#f04060"/><rect x="40" y="14" width="2" height="2" fill="#f02050"/><rect x="42" y="14" width="2" height="2" fill="#e01838"/><rect x="44" y="14" width="2" height="2" fill="#f04060"/><rect x="46" y="14" width="2" height="2" fill="#d01028"/><rect x="0" y="16" width="2" height="2" fill="#c01030"/><rect x="2" y="16" width="2" height="2" fill="#ff6080"/><rect x="4" y="16" width="2" height="2" fill="#d01028"/><rect x="6" y="16" width="2" height="2" fill="#f02050"/><rect x="8" y="16" width="2" height="2" fill="#d01028"/><rect x="10" y="16" width="2" height="2" fill="#c01030"/><rect x="12" y="16" width="2" height="2" fill="#b81830"/><rect x="14" y="16" width="2" height="2" fill="#ff6080"/><rect x="16" y="16" width="2" height="2" fill="#ff6080"/><rect x="18" y="16" width="2" height="2" fill="#f8c040"/><rect x="20" y="16" width="2" height="2" fill="#d01028"/><rect x="22" y="16" width="2" height="2" fill="#b81830"/><rect x="24" y="16" width="2" height="2" fill="#ff6080"/><rect x="26" y="16" width="2" height="2" fill="#b81830"/><rect x="28" y="16" width="2" height="2" fill="#b81830"/><rect x="30" y="16" width="2" height="2" fill="#e01838"/><rect x="32" y="16" width="2" height="2" fill="#b81830"/><rect x="34" y="16" width="2" height="2" fill="#c01030"/><rect x="36" y="16" width="2" height="2" fill="#f04060"/><rect x="38" y="16" width="2" height="2" fill="#e01838"/><rect x="40" y="16" width="2" height="2" fill="#f8c040"/><rect x="42" y="16" width="2" height="2" fill="#b81830"/><rect x="44" y="16" width="2" height="2" fill="#f04060"/><rect x="46" y="16" width="2" height="2" fill="#e01838"/><rect x="0" y="18" width="2" height="2" fill="#f060a0"/><rect x="2" y="18" width="2" height="2" fill="#ffffff"/><rect x="4" y="18" width="2" height="2" fill="#d02050"/><rect x="6" y="18" width="2" height="2" fill="#50a050"/><rect x="8" y="18" width="2" height="2" fill="#e04080"/><rect x="10" y="18" width="2" height="2" fill="#ffffff"/><rect x="12" y="18" width="2" height="2" fill="#e04080"/><rect x="14" y="18" width="2" height="2" fill="#50a050"/><rect x="16" y="18" width="2" height="2" fill="#408040"/><rect x="18" y="18" width="2" height="2" fill="#408040"/><rect x="20" y="18" width="2" height="2" fill="#50a050"/><rect x="22" y="18" width="2" height="2" fill="#306030"/><rect x="24" y="18" width="2" height="2" fill="#408040"/><rect x="26" y="18" width="2" height="2" fill="#408040"/><rect x="28" y="18" width="2" height="2" fill="#f060a0"/><rect x="30" y="18" width="2" height="2" fill="#e04080"/><rect x="32" y="18" width="2" height="2" fill="#f0a0c0"/><rect x="34" y="18" width="2" height="2" fill="#ffffff"/><rect x="36" y="18" width="2" height="2" fill="#50a050"/><rect x="38" y="18" width="2" height="2" fill="#408040"/><rect x="40" y="18" width="2" height="2" fill="#306030"/><rect x="42" y="18" width="2" height="2" fill="#408040"/><rect x="44" y="18" width="2" height="2" fill="#e04080"/><rect x="46" y="18" width="2" height="2" fill="#d02050"/><rect x="0" y="20" width="2" height="2" fill="#f0a0c0"/><rect x="2" y="20" width="2" height="2" fill="#ffffff"/><rect x="4" y="20" width="2" height="2" fill="#f060a0"/><rect x="6" y="20" width="2" height="2" fill="#408040"/><rect x="8" y="20" width="2" height="2" fill="#d02050"/><rect x="10" y="20" width="2" height="2" fill="#50a050"/><rect x="12" y="20" width="2" height="2" fill="#50a050"/><rect x="14" y="20" width="2" height="2" fill="#e04080"/><rect x="16" y="20" width="2" height="2" fill="#e04080"/><rect x="18" y="20" width="2" height="2" fill="#f0a0c0"/><rect x="20" y="20" width="2" height="2" fill="#50a050"/><rect x="22" y="20" width="2" height="2" fill="#ffffff"/><rect x="24" y="20" width="2" height="2" fill="#f0a0c0"/><rect x="26" y="20" width="2" height="2" fill="#408040"/><rect x="28" y="20" width="2" height="2" fill="#f060a0"/><rect x="30" y="20" width="2" height="2" fill="#306030"/><rect x="32" y="20" width="2" height="2" fill="#408040"/><rect x="34" y="20" width="2" height="2" fill="#ffffff"/><rect x="36" y="20" width="2" height="2" fill="#50a050"/><rect x="38" y="20" width="2" height="2" fill="#ffffff"/><rect x="40" y="20" width="2" height="2" fill="#306030"/><rect x="42" y="20" width="2" height="2" fill="#408040"/><rect x="44" y="20" width="2" height="2" fill="#f060a0"/><rect x="46" y="20" width="2" height="2" fill="#d02050"/><rect x="0" y="22" width="2" height="2" fill="#408040"/><rect x="2" y="22" width="2" height="2" fill="#408040"/><rect x="4" y="22" width="2" height="2" fill="#f0a0c0"/><rect x="6" y="22" width="2" height="2" fill="#408040"/><rect x="8" y="22" width="2" height="2" fill="#e04080"/><rect x="10" y="22" width="2" height="2" fill="#408040"/><rect x="12" y="22" width="2" height="2" fill="#e04080"/><rect x="14" y="22" width="2" height="2" fill="#f060a0"/><rect x="16" y="22" width="2" height="2" fill="#408040"/><rect x="18" y="22" width="2" height="2" fill="#e04080"/><rect x="20" y="22" width="2" height="2" fill="#f060a0"/><rect x="22" y="22" width="2" height="2" fill="#d02050"/><rect x="24" y="22" width="2" height="2" fill="#f0a0c0"/><rect x="26" y="22" width="2" height="2" fill="#d02050"/><rect x="28" y="22" width="2" height="2" fill="#e04080"/><rect x="30" y="22" width="2" height="2" fill="#d02050"/><rect x="32" y="22" width="2" height="2" fill="#306030"/><rect x="34" y="22" width="2" height="2" fill="#306030"/><rect x="36" y="22" width="2" height="2" fill="#ffffff"/><rect x="38" y="22" width="2" height="2" fill="#d02050"/><rect x="40" y="22" width="2" height="2" fill="#ffffff"/><rect x="42" y="22" width="2" height="2" fill="#50a050"/><rect x="44" y="22" width="2" height="2" fill="#d02050"/><rect x="46" y="22" width="2" height="2" fill="#306030"/><rect x="0" y="24" width="2" height="2" fill="#e04080"/><rect x="2" y="24" width="2" height="2" fill="#f0a0c0"/><rect x="4" y="24" width="2" height="2" fill="#408040"/><rect x="6" y="24" width="2" height="2" fill="#306030"/><rect x="8" y="24" width="2" height="2" fill="#e04080"/><rect x="10" y="24" width="2" height="2" fill="#f0a0c0"/><rect x="12" y="24" width="2" height="2" fill="#408040"/><rect x="14" y="24" width="2" height="2" fill="#d02050"/><rect x="16" y="24" width="2" height="2" fill="#f060a0"/><rect x="18" y="24" width="2" height="2" fill="#306030"/><rect x="20" y="24" width="2" height="2" fill="#408040"/><rect x="22" y="24" width="2" height="2" fill="#306030"/><rect x="24" y="24" width="2" height="2" fill="#408040"/><rect x="26" y="24" width="2" height="2" fill="#d02050"/><rect x="28" y="24" width="2" height="2" fill="#f060a0"/><rect x="30" y="24" width="2" height="2" fill="#d02050"/><rect x="32" y="24" width="2" height="2" fill="#306030"/><rect x="34" y="24" width="2" height="2" fill="#306030"/><rect x="36" y="24" width="2" height="2" fill="#f060a0"/><rect x="38" y="24" width="2" height="2" fill="#408040"/><rect x="40" y="24" width="2" height="2" fill="#50a050"/><rect x="42" y="24" width="2" height="2" fill="#50a050"/><rect x="44" y="24" width="2" height="2" fill="#ffffff"/><rect x="46" y="24" width="2" height="2" fill="#e04080"/><rect x="0" y="26" width="2" height="2" fill="#306030"/><rect x="2" y="26" width="2" height="2" fill="#50a050"/><rect x="4" y="26" width="2" height="2" fill="#306030"/><rect x="6" y="26" width="2" height="2" fill="#f0a0c0"/><rect x="8" y="26" width="2" height="2" fill="#408040"/><rect x="10" y="26" width="2" height="2" fill="#d02050"/><rect x="12" y="26" width="2" height="2" fill="#d02050"/><rect x="14" y="26" width="2" height="2" fill="#ffffff"/><rect x="16" y="26" width="2" height="2" fill="#e04080"/><rect x="18" y="26" width="2" height="2" fill="#f060a0"/><rect x="20" y="26" width="2" height="2" fill="#e04080"/><rect x="22" y="26" width="2" height="2" fill="#306030"/><rect x="24" y="26" width="2" height="2" fill="#e04080"/><rect x="26" y="26" width="2" height="2" fill="#d02050"/><rect x="28" y="26" width="2" height="2" fill="#e04080"/><rect x="30" y="26" width="2" height="2" fill="#408040"/><rect x="32" y="26" width="2" height="2" fill="#f060a0"/><rect x="34" y="26" width="2" height="2" fill="#f0a0c0"/><rect x="36" y="26" width="2" height="2" fill="#50a050"/><rect x="38" y="26" width="2" height="2" fill="#306030"/><rect x="40" y="26" width="2" height="2" fill="#408040"/><rect x="42" y="26" width="2" height="2" fill="#e04080"/><rect x="44" y="26" width="2" height="2" fill="#e04080"/><rect x="46" y="26" width="2" height="2" fill="#306030"/></svg>
<div class="t" style="left:104px;top:357.2px;font-size:7.6px;font-weight:bold;color:#fff;letter-spacing:-0.5px;text-shadow:0.8px 0 0 #1e2430,-0.8px 0 0 #1e2430,0 0.8px 0 #1e2430,0 -0.8px 0 #1e2430,0.6px 0.6px 0 #1e2430,-0.6px -0.6px 0 #1e2430,0.6px -0.6px 0 #1e2430,-0.6px 0.6px 0 #1e2430">VIDEO_TS.IFO</div>

<div class="a" style="left:5px;top:366px;width:45px;height:17px;background:#eceef4;border-bottom:1px solid #c4cbd8"></div>
<div class="a" style="left:50px;top:366px;width:595px;height:17px;background:#fff;border-bottom:1px solid #c4cbd8"></div>
<svg class="a" style="left:34px;top:369px" width="10" height="11" viewBox="0 0 10 11">
 <g fill="none" stroke="#111" stroke-width="1.2"><circle cx="2.5" cy="8.3" r="1.8"/><circle cx="7.5" cy="8.3" r="1.8"/><path d="M3.3,6.6 L7.6,0.5 M6.7,6.6 L2.4,0.5"/></g>
</svg>
<div class="a" style="left:50px;top:367px;width:65px;height:15px;background:#3a70d8;border-left:1.5px solid #f0b400;border-right:1.5px solid #f0b400"></div>

<div class="a" style="left:5px;top:383px;width:640px;height:11px;background:#eceef3;border-bottom:1px solid #cdd3de"></div>
<div class="a" style="left:8px;top:386px;width:6.5px;height:6.5px;border:1px solid #222;background:#f4f6fa"></div><div class="a" style="left:9.5px;top:388.5px;width:3px;height:1px;background:#111"></div>
<div class="t k" style="left:16px;top:386px;font-size:7px">Efectos video</div>
<div class="a" style="left:5px;top:394px;width:640px;height:17px;background:#f3f5f9;border-bottom:1px solid #cdd3de"></div>
<div class="a" style="left:8px;top:395px;width:42px;height:15px;background:#dfe3ec"></div>
<div class="a" style="left:5px;top:411px;width:640px;height:11px;background:#eceef3;border-bottom:1px solid #cdd3de"></div>
<div class="a" style="left:8px;top:414px;width:6.5px;height:6.5px;border:1px solid #222;background:#f4f6fa"></div><div class="a" style="left:9.5px;top:416.5px;width:3px;height:1px;background:#111"></div>
<div class="t k" style="left:16px;top:414px;font-size:7px">Efectos audio</div>
<div class="a" style="left:5px;top:422px;width:640px;height:17px;background:#f3f5f9;border-bottom:1px solid #cdd3de"></div>
<div class="a" style="left:8px;top:423px;width:42px;height:15px;background:#dfe3ec"></div>
<svg class="a" style="left:12px;top:396px" width="34" height="42" viewBox="0 0 34 42">
 <path d="M2.5,6.5 q4.5,-4 9,0 q-4.5,4 -9,0z" fill="none" stroke="#222" stroke-width="1.1"/><circle cx="7" cy="6.5" r="1.6" fill="#222"/><path d="M3,4 l2,1 M11,4 l-2,1" stroke="#222" stroke-width="0.8"/>
 <rect x="22.2" y="1.7" width="9.6" height="10" fill="#fff" stroke="#111" stroke-width="1.5"/><rect x="25.5" y="5" width="3" height="3.5" fill="#222"/>
 <path d="M2.5,34.5 q4.5,-4 9,0 q-4.5,4 -9,0z" fill="none" stroke="#222" stroke-width="1.1"/><circle cx="7" cy="34.5" r="1.6" fill="#222"/><path d="M3,32 l2,1 M11,32 l-2,1" stroke="#222" stroke-width="0.8"/>
 <path d="M22,32.5 h2 l4,-4.5 v13 l-4,-4.5 h-2z" fill="#222"/><polygon points="30,32 30.8,33.7 32.6,33.8 31.2,35 31.7,36.8 30,35.8 28.3,36.8 28.8,35 27.4,33.8 29.2,33.7" fill="#222"/>
</svg>
<div class="a" style="left:5px;top:439px;width:640px;height:23px;background:#f3f5fa"></div>
<div class="a" style="left:5px;top:462px;width:640px;height:9px;background:#f3f5fa;border-bottom:1px solid #c8d0de"></div>
<div class="a" style="left:14px;top:464px;width:621px;height:4px;background:#cdd6e8;border:1px solid #b0bcd4"></div>
<svg class="a" style="left:7px;top:463px" width="636" height="7" viewBox="0 0 636 7"><polygon points="2,3.5 5,1 5,6" fill="#111"/><polygon points="634,3.5 631,1 631,6" fill="#111"/></svg>
<div class="a" style="left:181px;top:325px;width:1.2px;height:137px;background:repeating-linear-gradient(#151515 0 2.2px,#7a7a7a 2.2px 3px);box-shadow:-1px 0 0 rgba(255,255,255,0.6),1px 0 0 rgba(255,255,255,0.6)"></div>
<svg class="a" style="left:176px;top:317px" width="11" height="9" viewBox="0 0 11 9"><path d="M1,1.5 Q1,0.5 2,0.5 H9 Q10,0.5 10,1.5 V5 L5.5,8 L1,5Z" fill="#2c62dc" stroke="#1c46b0" stroke-width="0.6"/></svg>

<!-- bottom buttons -->
<div class="a" style="left:536px;top:475px;width:49px;height:16px;background:#dbe2ee;border:1px solid #a9b3c6;box-shadow:inset 0 0 0 1px #f2f5fa"></div>
<div class="t k" style="left:560.5px;top:480px;font-size:7px;transform:translateX(-50%)">Aceptar</div>
<div class="a" style="left:588px;top:475px;width:53px;height:16px;background:#dbe2ee;border:1px solid #a9b3c6;box-shadow:inset 0 0 0 1px #f2f5fa"></div>
<div class="t k" style="left:614.5px;top:480px;font-size:7px;transform:translateX(-50%)">Cancelar</div>

<!-- callouts -->
<svg class="a" style="left:0;top:0" width="650" height="500" viewBox="0 0 650 500">
 <defs><filter id="sh" x="-10%" y="-10%" width="120%" height="130%"><feGaussianBlur stdDeviation="1.2"/></filter></defs>
 <path d="M136,193.5 H268.5 Q274.5,193.5 274.5,199.5 V261.5 Q274.5,267.5 268.5,267.5 H264.8 L265,286.5 L247.5,267.5 H136 Q130,267.5 130,261.5 V199.5 Q130,193.5 136,193.5Z" fill="#000" opacity="0.35" filter="url(#sh)" transform="translate(1,1.2)"/>
 <path d="M136,193.5 H268.5 Q274.5,193.5 274.5,199.5 V261.5 Q274.5,267.5 268.5,267.5 H264.8 L265,286.5 L247.5,267.5 H136 Q130,267.5 130,261.5 V199.5 Q130,193.5 136,193.5Z" fill="#245c94" stroke="#fff" stroke-width="2"/>
 <path d="M209.5,350 H371 Q377,350 377,356 V424.5 Q377,430.5 371,430.5 H209.5 Q203.5,430.5 203.5,424.5 V375.5 L184.5,359.3 H203.5 V356 Q203.5,350 209.5,350Z" fill="#000" opacity="0.35" filter="url(#sh)" transform="translate(1,1.2)"/>
 <path d="M209.5,350 H371 Q377,350 377,356 V424.5 Q377,430.5 371,430.5 H209.5 Q203.5,430.5 203.5,424.5 V375.5 L184.5,359.3 H203.5 V356 Q203.5,350 209.5,350Z" fill="#245c94" stroke="#fff" stroke-width="2"/>
 <g font-family="Liberation Sans" font-weight="bold" font-size="13.5" fill="#fff" text-anchor="middle">
  <text x="201.5" y="227.5" textLength="114" lengthAdjust="spacingAndGlyphs">...y pulse el botón</text>
  <text x="202" y="242">Fin</text>
  <text x="289.2" y="386.3" textLength="136" lengthAdjust="spacingAndGlyphs">Marque el punto final</text>
  <text x="288.8" y="401.8" textLength="133" lengthAdjust="spacingAndGlyphs">del área para borrar</text>
 </g>
</svg>
</body></html>
